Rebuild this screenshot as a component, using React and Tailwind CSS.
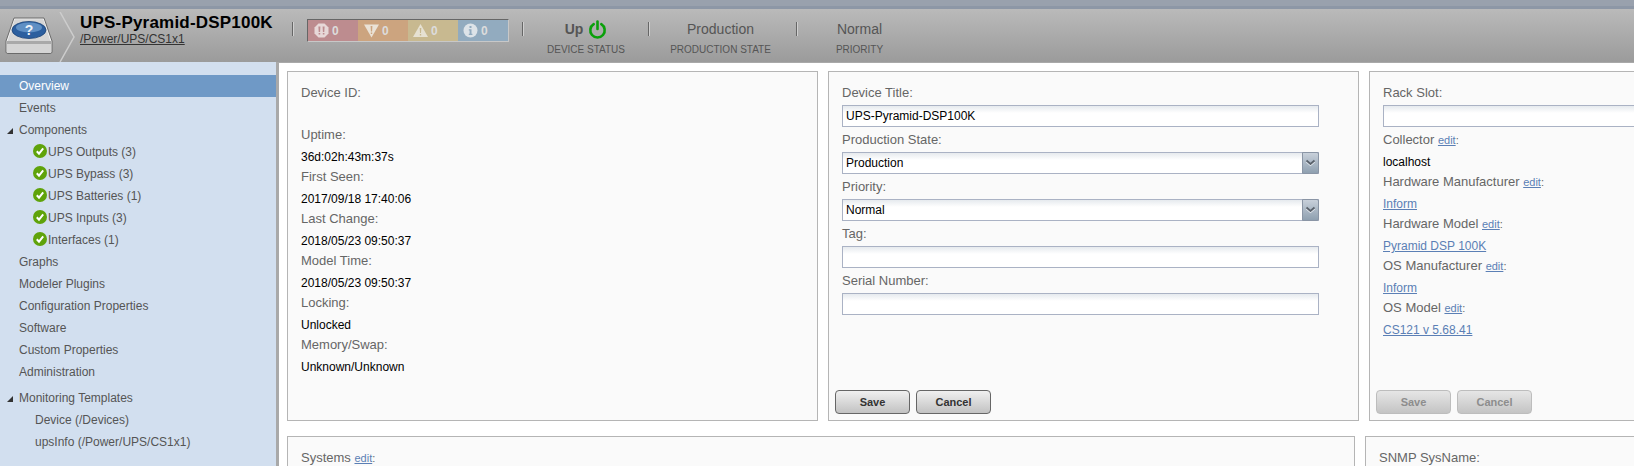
const FONT = 'font-["Liberation_Sans",Arial,sans-serif]'

function Sep() {
  return <div className="mt-[-3px] h-[14px] w-[2px] shrink-0 border-l border-[#666] bg-[#d0d0d0]" />
}

function DeviceIcon() {
  return (
    <svg width="48" height="38" viewBox="0 0 48 38" className="shrink-0">
      <path d="M9 1 H39 L47 24 V35 Q47 36.5 45 36.5 H3 Q1 36.5 1 35 V24 Z" fill="#f2f2f2" stroke="#6a6a6a" strokeWidth="1" />
      <path d="M9.8 2.2 H38.2 L45.4 24 H2.6 Z" fill="#d6d6d6" />
      <ellipse cx="24" cy="13" rx="17" ry="8.5" fill="#2c5f9f" stroke="#1c4478" strokeWidth="0.8" />
      <ellipse cx="24" cy="10.5" rx="13" ry="5" fill="#5f8fc4" />
      <text x="24" y="18" textAnchor="middle" fontSize="14" fontWeight="700" fill="#eef3f9" fontFamily="Liberation Sans">?</text>
      <rect x="2" y="24" width="44" height="3" fill="#a9a9a9" />
      <rect x="2" y="27" width="44" height="9" fill="#d4d4d4" />
    </svg>
  )
}

function EventIcon({ kind }) {
  return (
    <svg width="15" height="15" viewBox="0 0 15 15" className="shrink-0">
      {kind === 'crit' && <path d="M4.5 0.5 H10.5 L14.5 4.5 V10.5 L10.5 14.5 H4.5 L0.5 10.5 V4.5 Z" fill="#e7d8d8" />}
      {kind === 'crit' && <path d="M4.4 3.5 H6.4 L6.1 9 H4.7 Z M8.6 3.5 H10.6 L10.3 9 H8.9 Z M4.6 10 H6.2 V11.6 H4.6 Z M8.8 10 H10.4 V11.6 H8.8 Z" fill="#bd8c8f" />}
      {kind === 'err' && <path d="M0 1.5 H15 L7.5 14.5 Z" fill="#eae2d6" />}
      {kind === 'err' && <path d="M6.6 3 H8.4 L8.1 8.5 H6.9 Z M6.8 9.5 H8.2 V11 H6.8 Z" fill="#cca47f" />}
      {kind === 'warn' && <path d="M7.5 1 L15 14 H0 Z" fill="#e6e1d2" />}
      {kind === 'warn' && <path d="M6.7 5 H8.3 L8 10 H7 Z M6.8 11 H8.2 V12.5 H6.8 Z" fill="#c8b990" />}
      {kind === 'info' && <circle cx="7.5" cy="7.5" r="7" fill="#dde3e8" />}
      {kind === 'info' && <path d="M6.5 3 H8.5 V5 H6.5 Z M5.8 6.2 H8.5 V10.8 H9.4 V12 H5.8 V10.8 H6.6 V7.4 H5.8 Z" fill="#92abbf" />}
    </svg>
  )
}

function EventBox() {
  const cells = [
    { kind: 'crit', cls: 'bg-[#bd8c8f]', w: 'w-[50px]', pl: 'pl-[6px]' },
    { kind: 'err', cls: 'bg-[#cca47f]', w: 'w-[50px]', pl: 'pl-[6px]' },
    { kind: 'warn', cls: 'bg-[#c8b990]', w: 'w-[50px]', pl: 'pl-[5px]' },
    { kind: 'info', cls: 'bg-[#92abbf]', w: 'w-[50px]', pl: 'pl-[5px]' },
  ]
  return (
    <div className="flex h-[23px] w-[202px] shrink-0 border border-t-[#666] border-r-[#c8c8c8] border-b-[#c8c8c8] border-l-[#666]">
      {cells.map((c) => (
        <div key={c.kind} className={`flex items-center gap-[3px] ${c.cls} ${c.w} ${c.pl} text-[12px] font-bold text-[#dcdcdc]`}>
          <EventIcon kind={c.kind} />
          <span>0</span>
        </div>
      ))}
    </div>
  )
}

function PowerIcon() {
  return (
    <svg width="19" height="19" viewBox="0 0 19 19" className="shrink-0">
      <path d="M5.7 4.2 A7.2 7.2 0 1 0 13.3 4.2" fill="none" stroke="#0aa00a" strokeWidth="2.6" strokeLinecap="round" />
      <path d="M9.5 1.5 V9" fill="none" stroke="#0aa00a" strokeWidth="2.6" strokeLinecap="round" />
    </svg>
  )
}

function Stat({ label, className, children }) {
  return (
    <div className={`flex shrink-0 flex-col items-center ${className}`}>
      <div className="flex h-[20px] items-center gap-[5px] text-[14px] text-[#555]">{children}</div>
      <div className="mt-[4px] text-[10px] leading-[14px] text-[#555]">{label}</div>
    </div>
  )
}

function Header() {
  return (
    <div className="h-[62px] shrink-0">
      <div className="h-[6px] bg-[#99a1ad]" />
      <div className="h-[3px] bg-[#8d97a6]" />
      <div className="flex h-[53px] bg-gradient-to-b from-[#bababa] to-[#9b9b9b] pl-[5px]">
        <div className="mt-[8px]">
          <DeviceIcon />
        </div>
        <svg width="18" height="50" viewBox="0 0 18 50" className="ml-[6px] mt-[3px] shrink-0">
          <path d="M1 0 L15 25 L1 50" fill="none" stroke="#cdcdcd" strokeWidth="1.5" />
        </svg>
        <div className="ml-[3px] w-[212px] shrink-0">
          <div className="mt-[4px] whitespace-nowrap text-[17px] font-bold leading-[20px] tracking-[0.2px] text-black">UPS-Pyramid-DSP100K</div>
          <a className="block text-[12px] leading-[13px] text-[#333] underline">/Power/UPS/CS1x1</a>
        </div>
        <div className="flex items-start pt-[10px]">
          <div className="mt-[6px]"><Sep /></div>
          <div className="ml-[13px]"><EventBox /></div>
          <div className="ml-[13px] mt-[6px]"><Sep /></div>
          <Stat label="DEVICE STATUS" className="w-[124px]">
            <span className="font-bold">Up</span>
            <PowerIcon />
          </Stat>
          <div className="mt-[6px]"><Sep /></div>
          <Stat label="PRODUCTION STATE" className="w-[146px] pr-[5px]">Production</Stat>
          <div className="mt-[6px]"><Sep /></div>
          <Stat label="PRIORITY" className="w-[124px] pr-[1px]">Normal</Stat>
        </div>
      </div>
    </div>
  )
}

function Arrow() {
  return (
    <svg width="8" height="8" viewBox="0 0 8 8" className="absolute left-[6px] top-[8px]">
      <path d="M7 1 V7 H1 Z" fill="#333" />
    </svg>
  )
}

function CheckDot() {
  return (
    <svg width="14" height="14" viewBox="0 0 14 14" className="mr-[1px] mt-[-3px] shrink-0">
      <circle cx="7" cy="7" r="7" fill="#5fa30a" />
      <path d="M3.8 7.2 L6 9.6 L10.2 4.4" fill="none" stroke="#fff" strokeWidth="2" />
    </svg>
  )
}

function NavRow({ children, indent = 'pl-[19px]', active, arrow, className = '' }) {
  return (
    <div
      className={`relative flex h-[22px] items-center text-[12px] ${indent} ${className} ${
        active ? 'bg-[#6f99c6] text-white' : 'text-[#555]'
      }`}
    >
      {arrow && <Arrow />}
      {children}
    </div>
  )
}

function Sidebar() {
  const comps = ['UPS Outputs (3)', 'UPS Bypass (3)', 'UPS Batteries (1)', 'UPS Inputs (3)', 'Interfaces (1)']
  return (
    <div className="w-[279px] shrink-0 border-r-[3px] border-[#a9a9a9] bg-[#d2dfef] pt-[13px]">
      <NavRow active>Overview</NavRow>
      <NavRow>Events</NavRow>
      <NavRow arrow>Components</NavRow>
      {comps.map((c) => (
        <NavRow key={c} indent="pl-[33px]">
          <CheckDot />
          {c}
        </NavRow>
      ))}
      <NavRow>Graphs</NavRow>
      <NavRow>Modeler Plugins</NavRow>
      <NavRow>Configuration Properties</NavRow>
      <NavRow>Software</NavRow>
      <NavRow>Custom Properties</NavRow>
      <NavRow>Administration</NavRow>
      <NavRow arrow className="mt-[4px]">Monitoring Templates</NavRow>
      <NavRow indent="pl-[35px]">Device (/Devices)</NavRow>
      <NavRow indent="pl-[35px]">upsInfo (/Power/UPS/CS1x1)</NavRow>
    </div>
  )
}

function Label({ children, edit }) {
  return (
    <div className="h-[20px] text-[13px] leading-[20px] text-[#666]">
      {children}
      {edit && (
        <>
          {' '}
          <a className="text-[11px] text-[#5b7fb5] underline">edit</a>
          <span className="text-[11px]">:</span>
        </>
      )}
    </div>
  )
}

function Value({ children }) {
  return <div className="h-[22px] pt-[1px] text-[12px] leading-[22px] text-black">{children}</div>
}

function LinkValue({ children }) {
  return (
    <div className="h-[22px] pt-[1px] text-[12px] leading-[22px]">
      <a className="text-[#5b7fb5] underline">{children}</a>
    </div>
  )
}

const fieldCls =
  'block h-[22px] w-full border border-[#aab2c4] bg-[linear-gradient(#e6eaee,#ffffff_7px)] px-[3px] text-[12px] text-black outline-none appearance-none'

function Field({ value = '' }) {
  return (
    <div className="pb-[3px] pt-[2px]">
      <input className={fieldCls} defaultValue={value} />
    </div>
  )
}

function Select({ value }) {
  return (
    <div className="relative pb-[3px] pt-[2px]">
      <select className={fieldCls} defaultValue={value}>
        <option>{value}</option>
      </select>
      <div className="absolute right-0 top-[2px] flex h-[22px] w-[17px] items-center justify-center rounded-r-[2px] border border-[#8a95a5] bg-gradient-to-b from-[#c8d0da] to-[#8fa0b0]">
        <svg width="11" height="8" viewBox="0 0 11 8">
          <path d="M1.5 2.5 L5.5 6 L9.5 2.5" fill="none" stroke="#e8edf2" strokeWidth="1.8" />
          <path d="M1.5 1.5 L5.5 5 L9.5 1.5" fill="none" stroke="#5a626c" strokeWidth="1.8" />
        </svg>
      </div>
    </div>
  )
}

function Btn({ children, disabled }) {
  return (
    <button
      className={`h-[24px] w-[75px] rounded-[4px] border bg-gradient-to-b text-[11px] font-bold ${
        disabled
          ? 'border-[#bdbdbd] from-[#e6e6e6] to-[#c4c4c4] text-[#8d8d8d]'
          : 'border-[#666] from-[#f0f0f0] to-[#c2c2c2] text-[#333]'
      }`}
    >
      {children}
    </button>
  )
}

function Card({ className = '', children }) {
  return <div className={`relative shrink-0 border border-[#b5b5b5] bg-[#fafafa] ${className}`}>{children}</div>
}

function Actions({ disabled }) {
  return (
    <div className="absolute bottom-[6px] left-[6px] flex gap-[6px]">
      <Btn disabled={disabled}>Save</Btn>
      <Btn disabled={disabled}>Cancel</Btn>
    </div>
  )
}

function Main() {
  return (
    <div className="min-w-0 flex-1 overflow-hidden border-t border-[#a9a9a9] bg-white pl-[8px] pt-[8px]">
      <div className="flex gap-[10px]">
        <Card className="h-[350px] w-[531px] px-[13px] pt-[11px]">
          <Label>Device ID:</Label>
          <div className="h-[22px]" />
          <Label>Uptime:</Label>
          <Value>36d:02h:43m:37s</Value>
          <Label>First Seen:</Label>
          <Value>2017/09/18 17:40:06</Value>
          <Label>Last Change:</Label>
          <Value>2018/05/23 09:50:37</Value>
          <Label>Model Time:</Label>
          <Value>2018/05/23 09:50:37</Value>
          <Label>Locking:</Label>
          <Value>Unlocked</Value>
          <Label>Memory/Swap:</Label>
          <Value>Unknown/Unknown</Value>
        </Card>
        <Card className="h-[350px] w-[531px] px-[13px] pt-[11px]">
          <div className="w-[477px]">
            <Label>Device Title:</Label>
            <Field value="UPS-Pyramid-DSP100K" />
            <Label>Production State:</Label>
            <Select value="Production" />
            <Label>Priority:</Label>
            <Select value="Normal" />
            <Label>Tag:</Label>
            <Field />
            <Label>Serial Number:</Label>
            <Field />
          </div>
          <Actions />
        </Card>
        <Card className="h-[350px] w-[531px] px-[13px] pt-[11px]">
          <div className="w-[477px]">
            <Label>Rack Slot:</Label>
            <Field />
            <Label edit>Collector</Label>
            <Value>localhost</Value>
            <Label edit>Hardware Manufacturer</Label>
            <LinkValue>Inform</LinkValue>
            <Label edit>Hardware Model</Label>
            <LinkValue>Pyramid DSP 100K</LinkValue>
            <Label edit>OS Manufacturer</Label>
            <LinkValue>Inform</LinkValue>
            <Label edit>OS Model</Label>
            <LinkValue>CS121 v 5.68.41</LinkValue>
          </div>
          <Actions disabled />
        </Card>
      </div>
      <div className="mt-[15px] flex gap-[10px]">
        <Card className="h-[60px] w-[1068px] px-[13px] pt-[11px]">
          <Label edit>Systems</Label>
        </Card>
        <Card className="h-[60px] w-[531px] px-[13px] pt-[11px]">
          <Label>SNMP SysName:</Label>
        </Card>
      </div>
    </div>
  )
}

export default function App() {
  return (
    <div className={`flex h-[466px] w-[1634px] flex-col overflow-hidden bg-white ${FONT}`}>
      <Header />
      <div className="flex min-h-0 flex-1">
        <Sidebar />
        <Main />
      </div>
    </div>
  )
}
